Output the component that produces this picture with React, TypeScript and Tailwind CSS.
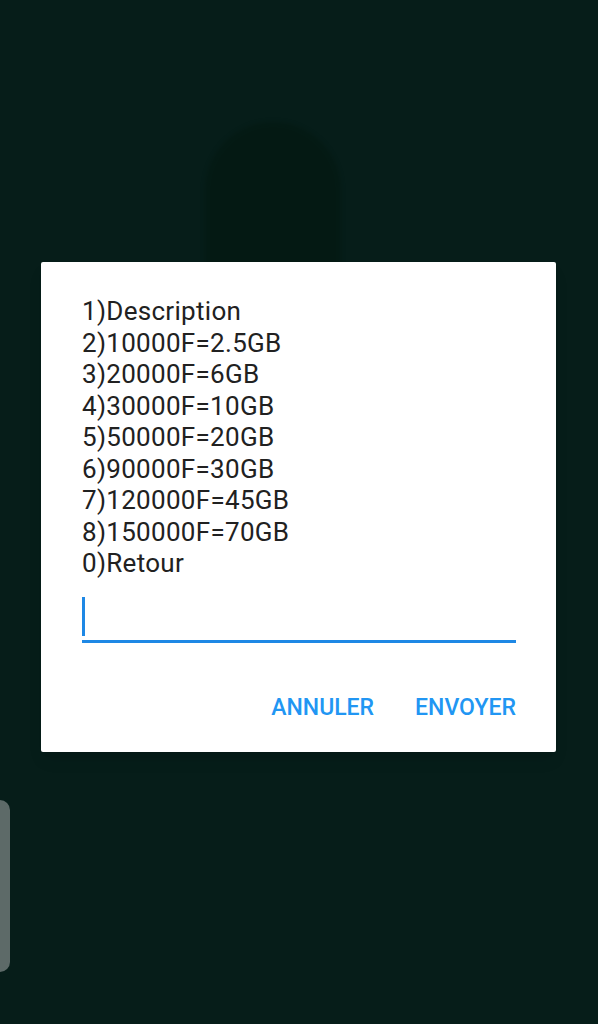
const lines = [
  "1)Description",
  "2)10000F=2.5GB",
  "3)20000F=6GB",
  "4)30000F=10GB",
  "5)50000F=20GB",
  "6)90000F=30GB",
  "7)120000F=45GB",
  "8)150000F=70GB",
  "0)Retour",
];

export default function App() {
  return (
    <div className="relative h-[1024px] w-[598px] overflow-hidden bg-[#061d19] font-['Roboto',sans-serif]">
      {/* faint wallpaper silhouette */}
      <div className="absolute left-[205px] top-[122px] h-[300px] w-[136px] rounded-t-full bg-[#03170f] opacity-50 blur-[2px]" />
      {/* edge handle */}
      <div className="absolute left-0 top-[800px] h-[172px] w-[10px] rounded-r-[10px] bg-[#5d6a68]" />

      <div className="relative flex flex-col pl-[41px] pt-[262px]">
        <div className="flex h-[490px] w-[515px] flex-col rounded-[2px] bg-white pl-[41px] pr-[40px] pt-[34px] shadow-lg">
          <div className="text-[26px] leading-[31.5px] tracking-[0.3px] text-[#212121]">
            {lines.map((l) => (
              <div key={l}>{l}</div>
            ))}
          </div>
          <div className="mt-[17px] flex h-[46px] flex-col justify-between">
            <div className="h-[39px] w-[3px] bg-[#1e88e5]" />
            <div className="h-[3px] w-full bg-[#1e88e5]" />
          </div>
          <div className="mt-[48px] flex justify-end gap-[41px] text-[23px] font-medium text-[#2196f3]">
            <span>ANNULER</span>
            <span>ENVOYER</span>
          </div>
        </div>
      </div>
    </div>
  );
}
